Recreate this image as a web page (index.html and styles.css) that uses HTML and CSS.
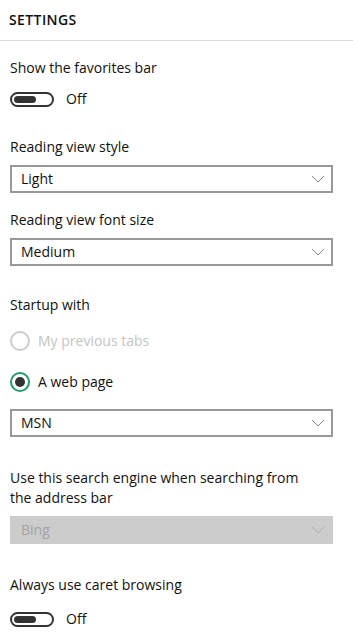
FILE: index.html
```html
<!DOCTYPE html>
<html lang="en">
<head>
    <meta charset="UTF-8">
    <meta name="viewport" content="width=device-width, initial-scale=1.0">
    <title>Settings</title>
    <link rel="stylesheet" href="styles.css">
</head>
<body>
    <div class="title">SETTINGS</div>

    <div class="panel">
        <div class="setting first">
            <div class="label">Show the favorites bar</div>
            <div class="toggle-row">
                <span class="toggle"><span class="knob"></span></span>
                <span>Off</span>
            </div>
        </div>

        <div class="setting after-toggle">
            <div class="label">Reading view style</div>
            <div class="select"><span>Light</span><svg class="chevron" width="14" height="8" viewBox="0 0 14 8"><path d="M1 1l6 6 6-6" fill="none" stroke="currentColor" stroke-width="1"/></svg></div>
        </div>

        <div class="setting tight">
            <div class="label">Reading view font size</div>
            <div class="select"><span>Medium</span><svg class="chevron" width="14" height="8" viewBox="0 0 14 8"><path d="M1 1l6 6 6-6" fill="none" stroke="currentColor" stroke-width="1"/></svg></div>
        </div>

        <div class="setting startup">
            <div class="label">Startup with</div>
            <div class="radio-row disabled"><span class="radio"></span><span>My previous tabs</span></div>
            <div class="radio-row"><span class="radio checked"></span><span>A web page</span></div>
            <div class="select spaced"><span>MSN</span><svg class="chevron" width="14" height="8" viewBox="0 0 14 8"><path d="M1 1l6 6 6-6" fill="none" stroke="currentColor" stroke-width="1"/></svg></div>
        </div>

        <div class="setting">
            <div class="label">Use this search engine when searching from the address bar</div>
            <div class="select off"><span>Bing</span><svg class="chevron" width="14" height="8" viewBox="0 0 14 8"><path d="M1 1l6 6 6-6" fill="none" stroke="currentColor" stroke-width="1"/></svg></div>
        </div>

        <div class="setting">
            <div class="label">Always use caret browsing</div>
            <div class="toggle-row last">
                <span class="toggle"><span class="knob"></span></span>
                <span>Off</span>
            </div>
        </div>
    </div>
</body>
</html>
```

FILE: styles.css
```css
body {
    font-family: 'Open Sans', 'Noto Sans', sans-serif;
    font-size: 14px;
    line-height: 20px;
    margin: 0;
    padding: 0;
    background-color: #ffffff;
    color: #111111;
    width: 353px;
    overflow: hidden;
}
.title {
    padding: 10px 9px 10px;
    font-weight: 600;
    font-size: 14px;
    letter-spacing: 0.4px;
    border-bottom: 1px solid #dcdcdc;
}
.panel {
    padding: 0 20px 0 10px;
}
.setting {
    margin-top: 31px;
}
.setting.first {
    margin-top: 17px;
}
.setting.after-toggle {
    margin-top: 28px;
}
.setting.tight {
    margin-top: 17px;
}
.setting.startup {
    margin-top: 29px;
}
.label {
    padding-right: 30px;
}
.toggle-row {
    display: flex;
    align-items: center;
    gap: 12px;
    height: 20px;
    margin-top: 11px;
}
.toggle-row.last {
    margin-top: 14px;
}
.toggle {
    box-sizing: border-box;
    width: 44px;
    height: 15px;
    border: 2px solid #333333;
    border-radius: 8px;
    padding: 2px;
    display: flex;
}
.knob {
    width: 22px;
    height: 7px;
    border-radius: 4px;
    background-color: #333333;
}
.select {
    box-sizing: border-box;
    height: 28px;
    margin-top: 8px;
    border: 2px solid #999999;
    padding: 0 6px 0 9px;
    display: flex;
    align-items: center;
    justify-content: space-between;
}
.select.spaced {
    margin-top: 17px;
}
.select.off {
    border-color: #cccccc;
    background-color: #cccccc;
    color: #a2a2a2;
}
.chevron {
    color: #8a8a8a;
}
.select.off .chevron {
    color: #b0b0b0;
}
.radio-row {
    display: flex;
    align-items: center;
    gap: 8px;
    height: 20px;
    margin-top: 16px;
}
.radio-row + .radio-row {
    margin-top: 21px;
}
.radio {
    box-sizing: border-box;
    width: 20px;
    height: 20px;
    border: 2px solid #333333;
    border-radius: 50%;
    display: flex;
    align-items: center;
    justify-content: center;
}
.radio.checked {
    border-color: #1f9d64;
}
.radio.checked::after {
    content: "";
    width: 10px;
    height: 10px;
    border-radius: 50%;
    background-color: #333333;
}
.radio-row.disabled {
    color: #c4c4c4;
}
.radio-row.disabled .radio {
    border-color: #cccccc;
}
```
